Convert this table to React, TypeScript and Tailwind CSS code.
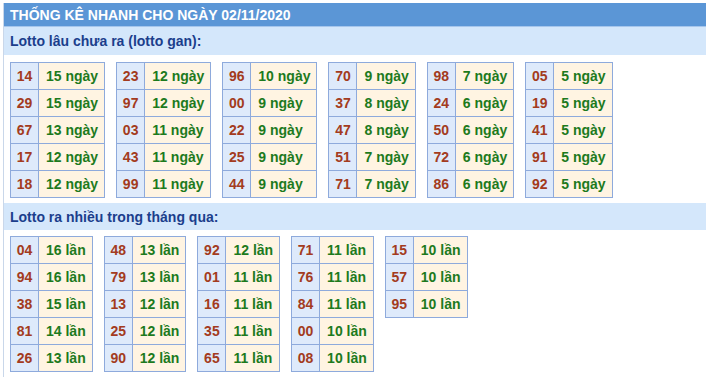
import React from "react";

type Row = [string, string];

const gan: Row[][] = [
  [["14", "15"], ["29", "15"], ["67", "13"], ["17", "12"], ["18", "12"]],
  [["23", "12"], ["97", "12"], ["03", "11"], ["43", "11"], ["99", "11"]],
  [["96", "10"], ["00", "9"], ["22", "9"], ["25", "9"], ["44", "9"]],
  [["70", "9"], ["37", "8"], ["47", "8"], ["51", "7"], ["71", "7"]],
  [["98", "7"], ["24", "6"], ["50", "6"], ["72", "6"], ["86", "6"]],
  [["05", "5"], ["19", "5"], ["41", "5"], ["91", "5"], ["92", "5"]],
];

const nhieu: Row[][] = [
  [["04", "16"], ["94", "16"], ["38", "15"], ["81", "14"], ["26", "13"]],
  [["48", "13"], ["79", "13"], ["13", "12"], ["25", "12"], ["90", "12"]],
  [["92", "12"], ["01", "11"], ["16", "11"], ["35", "11"], ["65", "11"]],
  [["71", "11"], ["76", "11"], ["84", "11"], ["00", "10"], ["08", "10"]],
  [["15", "10"], ["57", "10"], ["95", "10"]],
];

function Tbl({ rows, unit }: { rows: Row[]; unit: string }) {
  return (
    <div className="grid grid-cols-[27px_auto] gap-px bg-[#8eaadc] border border-[#8eaadc]">
      {rows.map(([n, v], i) => (
        <React.Fragment key={i}>
          <div className="h-[26px] flex items-center justify-center bg-[#deeafb] text-[#a33b20]">
            {n}
          </div>
          <div className="h-[26px] flex items-center pl-[7px] pr-[6px] bg-[#fff4e2] text-[#1d7a1d]">
            {v} {unit}
          </div>
        </React.Fragment>
      ))}
    </div>
  );
}

export default function App() {
  return (
    <div className="pt-[3px] pl-[3px] bg-white font-['Liberation_Sans',Arial,sans-serif] text-[14px] font-bold leading-none">
      <div className="border-l border-[#c9d7ea] pb-[5px]">
        <div className="h-[24px] bg-[#5b96d6] border-b border-[#a6c6ec] flex items-center pl-[6px] text-white">
          THỐNG KÊ NHANH CHO NGÀY 02/11/2020
        </div>
        <div className="h-[28px] bg-[#d4e7fb] flex items-center pl-[6px] text-[#1b3e8c]">
          Lotto lâu chưa ra (lotto gan):
        </div>
        <div className="flex items-start gap-[11px] pl-[6px] pt-[7px]">
          {gan.map((t, i) => (
            <Tbl key={i} rows={t} unit="ngày" />
          ))}
        </div>
        <div className="mt-[5px] h-[27px] bg-[#d4e7fb] flex items-center pl-[6px] text-[#1b3e8c]">
          Lotto ra nhiều trong tháng qua:
        </div>
        <div className="flex items-start gap-[11px] pl-[6px] pt-[6px]">
          {nhieu.map((t, i) => (
            <Tbl key={i} rows={t} unit="lần" />
          ))}
        </div>
      </div>
    </div>
  );
}
